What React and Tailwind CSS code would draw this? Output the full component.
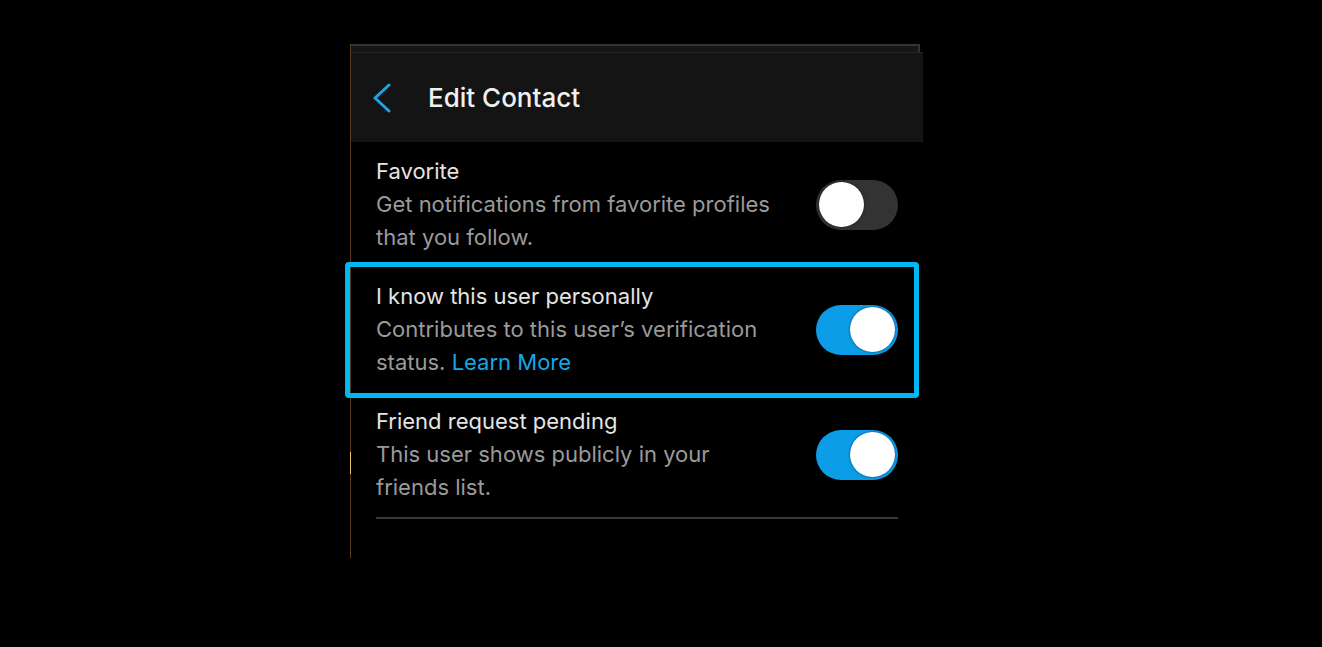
import React from "react";

function Toggle({ on }) {
  return (
    <div
      className={`relative flex h-[50px] w-[82px] shrink-0 items-center rounded-full px-[3px] ${
        on ? "justify-end bg-[#0b9de8]" : "justify-start bg-[#333333]"
      }`}
    >
      <div className="h-[45px] w-[45px] rounded-full bg-white shadow-[0_0_3px_rgba(0,0,0,0.5)]" />
    </div>
  );
}

function Row({ title, lines, on }) {
  return (
    <div className="flex items-center justify-between">
      <div className="text-[22px] leading-[33px]">
        <div className="text-[#e4e4e4]">{title}</div>
        {lines.map((l, i) => (
          <div key={i} className="text-[#9a9a9a]">
            {l}
          </div>
        ))}
      </div>
      <Toggle on={on} />
    </div>
  );
}

export default function App() {
  return (
    <div
      className="relative h-[647px] w-full overflow-hidden bg-black"
      style={{ fontFamily: "Inter, 'Noto Sans', sans-serif" }}
    >
      <div className="relative ml-[350px] mt-[44px] h-[514px] w-[573px] border-l border-[#5a3a1c]">
        <div className="absolute left-[-1px] top-[408px] h-[22px] w-[1px] bg-[#e8c860]" />
        <div className="h-[8px] w-[569px] border-t-2 border-r-2 border-[#3b322c] bg-[#161616]" />
        <div className="flex h-[90px] items-center border-t border-[#2a2420] bg-[#141414]">
          <svg
            width="20"
            height="30"
            viewBox="0 0 20 30"
            className="ml-[21px]"
            fill="none"
            stroke="#1aa6e6"
            strokeWidth="3"
            strokeLinecap="round"
            strokeLinejoin="round"
          >
            <path d="M17 2 L3 15 L17 28" />
          </svg>
          <div className="ml-[36px] text-[26px] font-medium text-[#f0f0f0]">Edit Contact</div>
        </div>
        <div className="relative w-[547px] pl-[25px] pt-[13px]">
          <div className="flex flex-col gap-[26px]">
            <Row
              title="Favorite"
              lines={["Get notifications from favorite profiles", "that you follow."]}
              on={false}
            />
            <div className="flex items-center justify-between">
              <div className="text-[22px] leading-[33px]">
                <div className="text-[#e4e4e4]">I know this user personally</div>
                <div className="text-[#9a9a9a]">Contributes to this user’s verification</div>
                <div className="text-[#9a9a9a]">
                  status. <span className="text-[#15a7e4]">Learn More</span>
                </div>
              </div>
              <Toggle on={true} />
            </div>
            <Row
              title="Friend request pending"
              lines={["This user shows publicly in your", "friends list."]}
              on={true}
            />
          </div>
          <div className="mt-[13px] h-[2px] bg-[#3a3a3a]" />
          <div className="absolute left-[-6px] top-[120px] h-[136px] w-[574px] rounded-[4px] border-[5px] border-[#00b8f1]" />
        </div>
      </div>
    </div>
  );
}
